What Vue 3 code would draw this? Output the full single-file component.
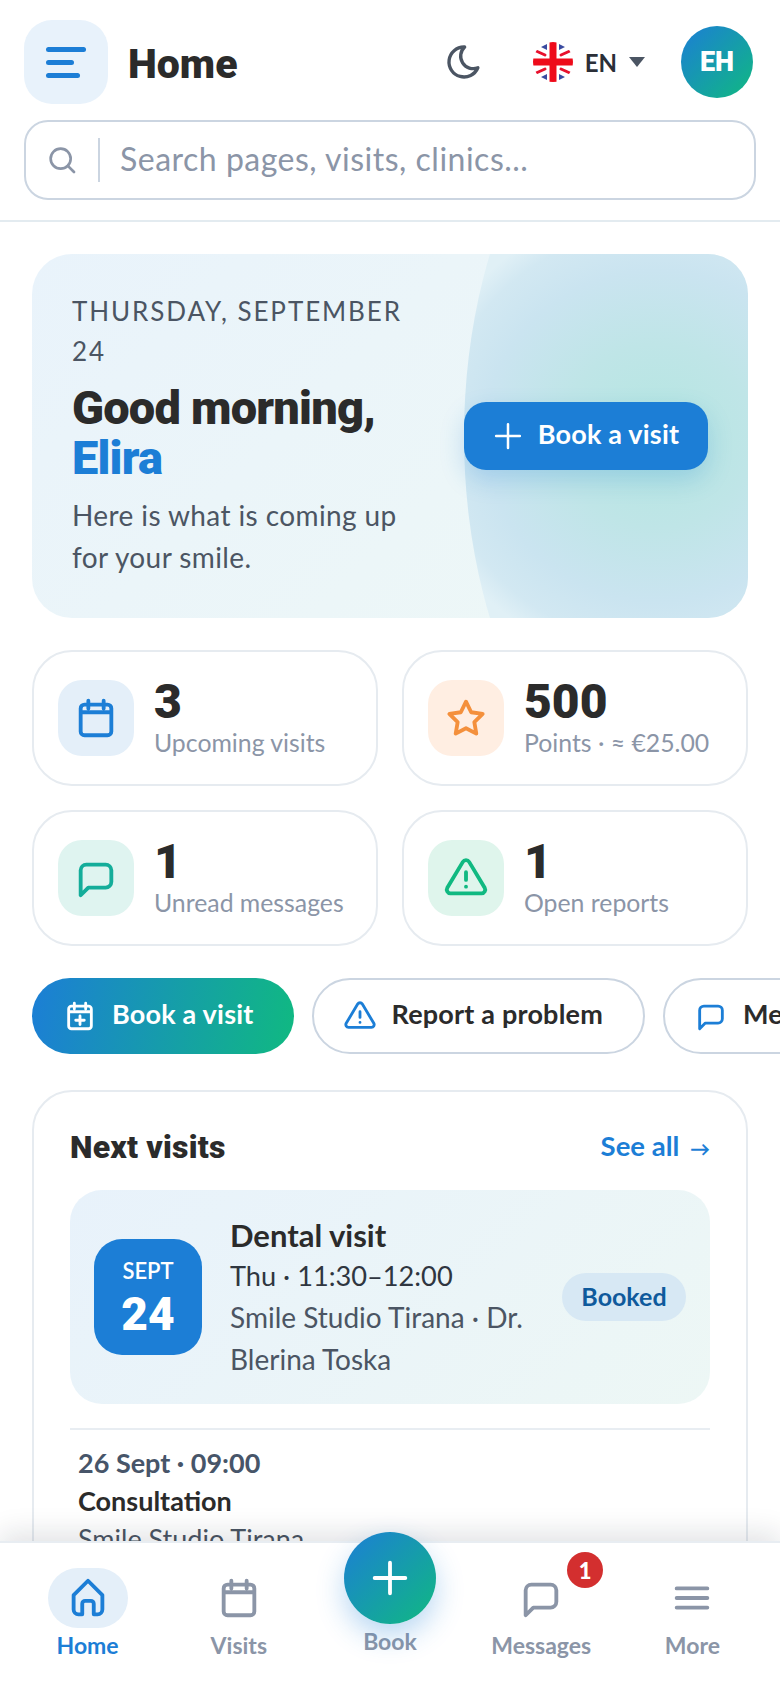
<template>
  <div class="app-shell">
    <header class="topbar">
      <div class="topbar-row">
        <button class="menu-btn">
          <span class="bar bar-1"></span>
          <span class="bar bar-2"></span>
          <span class="bar bar-3"></span>
        </button>
        <h1 class="page-title">Home</h1>
        <svg class="moon" viewBox="0 0 24 24"><path d="M12 3c.132 0 .263 0 .393 0a7.5 7.5 0 0 0 7.92 12.446a9 9 0 1 1 -8.313 -12.454z" /></svg>
        <div class="lang">
          <svg class="flag" viewBox="0 0 40 40">
            <defs><clipPath id="flagClip"><circle cx="20" cy="20" r="20" /></clipPath></defs>
            <g clip-path="url(#flagClip)">
              <rect width="40" height="40" fill="#fff" />
              <path d="M8 5l6-3v6zM26 2l6 3-6 3zM8 35l6-3v6zM26 32l6 3-6 3z" fill="#3a4ba0" />
              <path d="M2 8.500l10 4.500M38 8.500L28 13M2 31.500L12 27M38 31.500L28 27" stroke="#e8112d" stroke-width="3" />
              <path d="M20 0v40M0 20h40" stroke="#ee0b1a" stroke-width="7" />
            </g>
          </svg>
          <span class="lang-code">EN</span>
          <span class="caret"></span>
        </div>
        <div class="avatar">EH</div>
      </div>
      <div class="search">
        <svg class="search-icon" viewBox="0 0 24 24"><circle cx="11" cy="11" r="7.5" /><path d="M21 21l-4.6-4.6" /></svg>
        <span class="search-sep"></span>
        <span class="search-text">Search pages, visits, clinics...</span>
      </div>
    </header>

    <main class="content">
      <section class="hero">
        <div class="hero-blob"></div>
        <div class="hero-copy">
          <p class="hero-date">THURSDAY, SEPTEMBER 24</p>
          <h2 class="hero-title">Good morning,<br /><span>Elira</span></h2>
          <p class="hero-sub">Here is what is coming up for your smile.</p>
        </div>
        <button class="hero-btn">
          <svg viewBox="0 0 24 24"><path d="M12 2.5v19M2.500 12h19" /></svg>
          <span class="btn-text">Book a visit</span>
        </button>
      </section>

      <section class="stats">
        <div v-for="s in stats" :key="s.label" class="stat">
          <div class="stat-tile" :class="s.tone">
            <svg viewBox="0 0 24 24"><path :d="icons[s.icon]" /></svg>
          </div>
          <div class="stat-text">
            <div class="stat-value">{{ s.value }}</div>
            <div class="stat-label">{{ s.label }}</div>
          </div>
        </div>
      </section>

      <section class="actions">
        <button v-for="a in actions" :key="a.label" class="action" :class="{ primary: a.primary }">
          <svg viewBox="0 0 24 24"><path :d="icons[a.icon]" /></svg>
          <span class="btn-text">{{ a.label }}</span>
        </button>
      </section>

      <section class="panel">
        <div class="panel-head">
          <h3>Next visits</h3>
          <span class="see-all">See all <i>→</i></span>
        </div>
        <div class="next-card">
          <div class="date-tile">
            <span class="date-month">SEPT</span>
            <span class="date-day">24</span>
          </div>
          <div class="next-info">
            <div class="next-title">Dental visit</div>
            <div class="next-time">Thu · 11:30–12:00</div>
            <div class="next-place">Smile Studio Tirana · Dr. Blerina Toska</div>
          </div>
          <span class="badge">Booked</span>
        </div>
        <div class="later">
          <div class="later-date">26 Sept · 09:00</div>
          <div class="later-title">Consultation</div>
          <div class="later-place">Smile Studio Tirana</div>
        </div>
      </section>
    </main>

    <nav class="tabbar">
      <div v-for="t in tabs" :key="t.label" class="tab" :class="{ active: t.active, fab: t.fab }">
        <div class="tab-icon">
          <svg viewBox="0 0 24 24"><path :d="icons[t.icon]" /></svg>
          <span v-if="t.count" class="tab-count">{{ t.count }}</span>
        </div>
        <span class="tab-label">{{ t.label }}</span>
      </div>
    </nav>
  </div>
</template>

<script setup>
const icons = {
  calendar: 'M4 7a2 2 0 0 1 2-2h12a2 2 0 0 1 2 2v12a2 2 0 0 1-2 2H6a2 2 0 0 1-2-2zM16 3v4M8 3v4M4 9h16',
  calendarPlus: 'M4 7a2 2 0 0 1 2-2h12a2 2 0 0 1 2 2v12a2 2 0 0 1-2 2H6a2 2 0 0 1-2-2zM16 3v4M8 3v4M4 9h16M12 12v6M9 15h6',
  star: 'M12 3.500l2.700 5.500 6 .9-4.350 4.250 1.030 6-5.380-2.830-5.380 2.830 1.030-6L3.300 9.900l6-.9z',
  message: 'M4 21V8a3 3 0 0 1 3-3h10a3 3 0 0 1 3 3v6a3 3 0 0 1-3 3H8z',
  alert: 'M12 9v4M10.363 3.591 2.257 17.125a1.914 1.914 0 0 0 1.636 2.871h16.214a1.914 1.914 0 0 0 1.636-2.870L13.637 3.590a1.914 1.914 0 0 0-3.274 0zM12 16.500h.01',
  home: 'M4.500 10.500L12 3l7.500 7.500V18a2.500 2.500 0 0 1-2.500 2.500h-2V15a1.500 1.500 0 0 0-1.500-1.500h-3A1.500 1.500 0 0 0 9 15v5.500H7A2.500 2.500 0 0 1 4.500 18z',
  plus: 'M12 4v16M4 12h16',
  menu: 'M4 7h16M4 12h16M4 17h16',
}

const stats = [
  { value: '3', label: 'Upcoming visits', icon: 'calendar', tone: 'blue' },
  { value: '500', label: 'Points · ≈ €25.00', icon: 'star', tone: 'orange' },
  { value: '1', label: 'Unread messages', icon: 'message', tone: 'teal' },
  { value: '1', label: 'Open reports', icon: 'alert', tone: 'green' },
]

const actions = [
  { label: 'Book a visit', icon: 'calendarPlus', primary: true },
  { label: 'Report a problem', icon: 'alert' },
  { label: 'Messages', icon: 'message' },
]

const tabs = [
  { label: 'Home', icon: 'home', active: true },
  { label: 'Visits', icon: 'calendar' },
  { label: 'Book', icon: 'plus', fab: true },
  { label: 'Messages', icon: 'message', count: 1 },
  { label: 'More', icon: 'menu' },
]
</script>

<style>
html, body {
  margin: 0;
  background: #fff;
}
</style>

<style scoped>
.app-shell {
  height: 1688px;
  width: 780px;
  display: flex;
  flex-direction: column;
  overflow: hidden;
  background: #fff;
  color: #2b2b2b;
  font-family: "Lato", "Noto Sans", sans-serif;
}

button {
  font-family: inherit;
  border: 0;
  cursor: pointer;
}

svg {
  fill: none;
  stroke: currentColor;
  stroke-width: 2;
  stroke-linecap: round;
  stroke-linejoin: round;
  flex: none;
}

/* Header */
.topbar {
  flex: none;
  height: 222px;
  box-sizing: border-box;
  padding: 20px 24px 0;
  border-bottom: 2px solid #e3ebf0;
}

.topbar-row {
  display: flex;
  align-items: center;
  height: 84px;
}

.menu-btn {
  width: 84px;
  height: 84px;
  border-radius: 28px;
  background: #e8f2fb;
  display: flex;
  flex-direction: column;
  gap: 8px;
  padding: 0 0 0 22px;
  justify-content: center;
  align-items: flex-start;
}

.bar {
  display: block;
  height: 5px;
  border-radius: 3px;
  background: #1c7ed6;
}
.bar-1 { width: 40px; }
.bar-2 { width: 28px; }
.bar-3 { width: 34px; }

.page-title {
  margin: 4px 0 0 20px;
  flex: 1;
  font-family: "Roboto", sans-serif;
  font-size: 41px;
  font-weight: 900;
  color: #2b2b2b;
}

.moon {
  width: 40px;
  height: 40px;
  color: #4b5563;
  margin-right: 49px;
}

.lang {
  display: flex;
  align-items: center;
  margin-right: 36px;
}

.flag {
  width: 40px;
  height: 40px;
  stroke: none;
}

.lang-code {
  margin-left: 12px;
  font-size: 24px;
  font-weight: 700;
  color: #2b2f38;
}

.caret {
  margin-left: 12px;
  border-left: 8px solid transparent;
  border-right: 8px solid transparent;
  border-top: 10px solid #4b5563;
}

.avatar {
  width: 72px;
  height: 72px;
  margin-right: 3px;
  border-radius: 50%;
  background: linear-gradient(135deg, #1c7ed6, #10b981);
  color: #fff;
  font-family: "Roboto", sans-serif;
  font-size: 27px;
  font-weight: 900;
  display: flex;
  align-items: center;
  justify-content: center;
}

.search {
  margin-top: 16px;
  height: 80px;
  box-sizing: border-box;
  border: 2px solid #cbd5e1;
  border-radius: 24px;
  display: flex;
  align-items: center;
  padding-left: 20px;
}

.search-icon {
  width: 32px;
  height: 32px;
  color: #8b95a7;
}

.search-sep {
  width: 2px;
  height: 44px;
  background: #cbd5e1;
  margin: 0 20px 0 20px;
}

.search-text {
  padding-bottom: 4px;
  font-size: 32px;
  letter-spacing: 0.5px;
  color: #8b95a7;
}

/* Page content */
.content {
  flex: 1;
  min-height: 0;
  overflow: hidden;
  padding: 32px 32px 0;
}

.hero {
  position: relative;
  overflow: hidden;
  height: 364px;
  border-radius: 40px;
  background: linear-gradient(135deg, #e9f3fb, #eef8f6);
  display: flex;
  align-items: center;
  justify-content: space-between;
  padding: 0 40px;
}

.hero-blob {
  position: absolute;
  left: 432px;
  top: -228px;
  width: 500px;
  height: 820px;
  border-radius: 50%;
  background: radial-gradient(ellipse 240px 230px at 193px 410px, #b4e6e1 0%, #bfe5e7 40%, #cae4f0 72%, #d2e8f2 90%, #e0f0f6 100%);
}

.hero-copy {
  position: relative;
  width: 340px;
  margin-bottom: 3px;
}

.hero-date {
  margin: 0;
  font-size: 26px;
  line-height: 40px;
  letter-spacing: 1.9px;
  color: #4b5563;
}

.hero-title {
  margin: 12px 0 0;
  font-family: "Roboto", sans-serif;
  font-size: 47px;
  line-height: 50px;
  font-weight: 900;
  letter-spacing: -0.8px;
  color: #2b2b2b;
}

.hero-title span {
  color: #1c7ed6;
}

.hero-sub {
  margin: 11px 0 0;
  font-size: 28px;
  line-height: 42px;
  letter-spacing: 0.4px;
  color: #4b5563;
}

.hero-btn {
  position: relative;
  width: 244px;
  height: 68px;
  border-radius: 22px;
  background: #1c7ed6;
  color: #fff;
  font-size: 27px;
  font-weight: 700;
  display: flex;
  align-items: center;
  justify-content: center;
  gap: 15px;
  box-shadow: 0 10px 24px rgba(28, 126, 214, 0.22);
}

.hero-btn svg {
  width: 30px;
  height: 30px;
}

.btn-text {
  padding-bottom: 5px;
  letter-spacing: 0.2px;
}

/* Stats */
.stats {
  margin-top: 32px;
  display: grid;
  grid-template-columns: 1fr 1fr;
  gap: 24px;
}

.stat {
  height: 136px;
  box-sizing: border-box;
  border: 2px solid #e6ebf0;
  border-radius: 40px;
  display: flex;
  align-items: center;
  padding-left: 24px;
  gap: 20px;
}

.stat-tile {
  width: 76px;
  height: 76px;
  border-radius: 24px;
  display: flex;
  align-items: center;
  justify-content: center;
}

.stat-tile svg {
  width: 46px;
  height: 46px;
}

.blue { background: #e4eff9; color: #1c7ed6; }
.orange { background: #ffeee2; color: #f4903c; }
.teal { background: #dff4f0; color: #14ad9a; }
.green { background: #dff5ec; color: #10b981; }

.stat-value {
  font-family: "Roboto", sans-serif;
  font-size: 48px;
  line-height: 50px;
  font-weight: 900;
  color: #2b2b2b;
}

.stat-label {
  font-size: 24.8px;
  line-height: 32px;
  color: #8b95a7;
}

/* Quick actions */
.actions {
  margin-top: 32px;
  display: flex;
  gap: 18px;
  width: 760px;
  overflow: hidden;
}

.action {
  flex: none;
  height: 76px;
  box-sizing: border-box;
  border-radius: 38px;
  border: 2px solid #cbd5e1;
  background: #fff;
  color: #2b2b2b;
  font-size: 27px;
  font-weight: 700;
  display: flex;
  align-items: center;
  gap: 15px;
  padding: 0 40px 0 29px;
}

.action svg {
  width: 34px;
  height: 34px;
  color: #1c7ed6;
}

.action.primary {
  border: 0;
  padding-left: 31px;
  color: #fff;
  background: linear-gradient(100deg, #1c7ed6, #10b981);
}

.action.primary svg {
  color: #fff;
}

/* Next visits */
.panel {
  margin-top: 36px;
  border: 2px solid #e6ebf0;
  border-radius: 40px;
  padding: 32px 36px;
}

.panel-head {
  display: flex;
  align-items: center;
  justify-content: space-between;
  height: 50px;
  padding-bottom: 4px;
  box-sizing: border-box;
}

.panel-head h3 {
  margin: 0;
  font-family: "Roboto", sans-serif;
  font-size: 32px;
  letter-spacing: 0.2px;
  font-weight: 900;
  color: #2b2b2b;
}

.see-all {
  font-size: 27.5px;
  font-weight: 700;
  color: #1c7ed6;
  padding-bottom: 4px;
}

.see-all i {
  font-style: normal;
  font-size: 20px;
  margin-left: 4px;
}

.next-card {
  margin-top: 16px;
  height: 214px;
  box-sizing: border-box;
  padding: 0 24px;
  border-radius: 32px;
  background: linear-gradient(135deg, #e8f2fb, #edf7f5);
  display: flex;
  align-items: center;
  gap: 28px;
}

.date-tile {
  flex: none;
  width: 108px;
  height: 116px;
  border-radius: 28px;
  background: #1c7ed6;
  color: #fff;
  display: flex;
  flex-direction: column;
  align-items: center;
  justify-content: center;
}

.date-month {
  font-size: 22px;
  line-height: 30px;
  font-weight: 600;
}

.date-day {
  margin-top: 4px;
  font-family: "Roboto", sans-serif;
  font-size: 46px;
  line-height: 48px;
  font-weight: 900;
}

.next-info {
  flex: 1;
  min-width: 0;
}

.next-title {
  font-size: 31px;
  line-height: 42px;
  font-weight: 700;
  color: #2b2b2b;
}

.next-time {
  font-size: 27.2px;
  line-height: 40px;
  color: #2f3640;
}

.next-place {
  font-size: 28px;
  line-height: 42px;
  color: #4b5563;
}

.badge {
  flex: none;
  height: 48px;
  box-sizing: border-box;
  padding: 0 0 3px;
  width: 124px;
  justify-content: center;
  border-radius: 24px;
  background: #d7e8f4;
  color: #0f5a9c;
  font-size: 25px;
  font-weight: 700;
  display: flex;
  align-items: center;
}

.later {
  margin-top: 24px;
  border-top: 2px solid #e8edf2;
  padding: 14px 8px 0;
  font-size: 27px;
  line-height: 38px;
}

.later-date {
  font-weight: 700;
  color: #475569;
}

.later-title {
  font-weight: 700;
  color: #2b2b2b;
}

.later-place {
  color: #4b5563;
}

/* Bottom nav */
.tabbar {
  flex: none;
  position: relative;
  height: 147px;
  box-sizing: border-box;
  padding: 25px 12px 0;
  background: #fff;
  border-top: 2px solid #e8edf2;
  box-shadow: 0 -8px 26px rgba(15, 23, 42, 0.12);
  display: grid;
  grid-template-columns: repeat(5, 1fr);
}

.tab {
  display: flex;
  flex-direction: column;
  align-items: center;
  color: #8b95a7;
}

.tab-icon {
  position: relative;
  width: 80px;
  height: 60px;
  border-radius: 30px;
  display: flex;
  align-items: center;
  justify-content: center;
}

.tab-icon svg {
  width: 46px;
  height: 46px;
}

.tab.active {
  color: #1c7ed6;
}

.tab.active .tab-icon {
  background: #e4eff9;
}

.tab-label {
  margin-top: 2px;
  font-size: 23px;
  line-height: 30px;
  font-weight: 700;
}

.tab.fab .tab-icon {
  width: 92px;
  height: 92px;
  margin-top: -36px;
  border-radius: 50%;
  color: #fff;
  background: linear-gradient(135deg, #1c7ed6, #10b981);
  box-shadow: 0 12px 28px rgba(28, 126, 214, 0.3);
}

.tab.fab .tab-icon svg {
  width: 46px;
  height: 46px;
}

.tab-count {
  position: absolute;
  top: -16px;
  right: -22px;
  width: 36px;
  height: 36px;
  border-radius: 50%;
  background: #d32f2f;
  color: #fff;
  font-size: 22px;
  font-weight: 900;
  display: flex;
  align-items: center;
  justify-content: center;
}
</style>
